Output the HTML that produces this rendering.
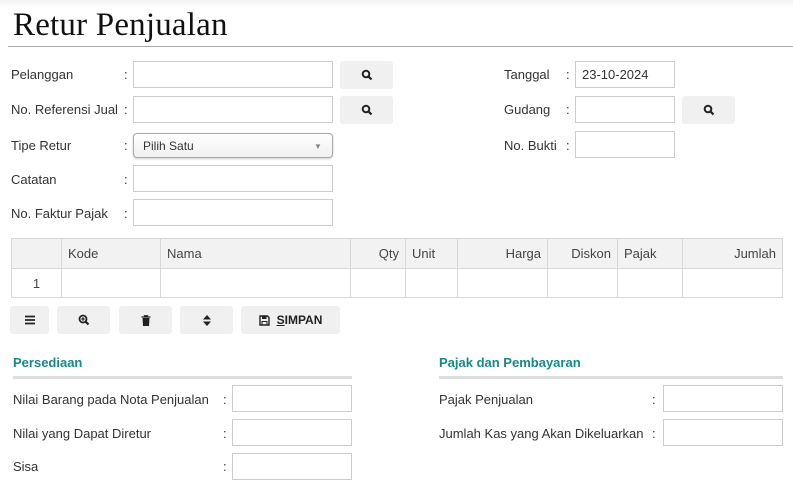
<!DOCTYPE html>
<html><head><meta charset="utf-8"><style>
*{box-sizing:border-box;margin:0;padding:0}
body{width:793px;height:495px;background:#fff;position:relative;overflow:hidden;font-family:"Liberation Sans",sans-serif;font-size:13px;color:#333}
.a{position:absolute}
.t{position:absolute;line-height:16px;white-space:nowrap}
.in{position:absolute;border:1px solid #ccc;background:#fff;height:27px}
.btn{position:absolute;background:#f0f0f0;border-radius:3px;height:28px;display:flex;align-items:center;justify-content:center;font-weight:bold;font-size:12px;color:#222}
h1{position:absolute;left:13px;top:7px;font-family:"Liberation Serif",serif;font-weight:normal;font-size:33px;color:#111;letter-spacing:0.2px}
table{position:absolute;left:11px;top:238px;border-collapse:collapse;width:772px}
td{border:1px solid #d8d8d8;height:29px;padding:0 6px;color:#444}
tr.h td{background:#f2f2f2;height:30px}
.r{text-align:right}
.sec{position:absolute;color:#17888a;font-weight:600;font-size:13px}
.ln{position:absolute;height:3px;background:#ddd}
</style></head><body>
<div class="a" style="left:0;top:0;width:793px;height:8px;background:linear-gradient(#f2f2f2,#fff)"></div>
<h1>Retur Penjualan</h1>
<div class="a" style="left:8px;top:46px;width:785px;height:1px;background:#aaa"></div>

<div class="t" style="left:11px;top:67px">Pelanggan</div><div class="t" style="left:124px;top:67px">:</div>
<div class="in" style="left:133px;top:61px;width:200px"></div>
<div class="btn" style="left:340px;top:61px;width:53px"><svg width="12" height="12" viewBox="0 0 12 12"><circle cx="5" cy="5" r="3.3" fill="none" stroke="#222" stroke-width="2"/><path d="M7.3 7.3L10.5 10.5" stroke="#222" stroke-width="2.2"/></svg></div>

<div class="t" style="left:11px;top:102px">No. Referensi Jual</div><div class="t" style="left:124px;top:102px">:</div>
<div class="in" style="left:133px;top:96px;width:200px"></div>
<div class="btn" style="left:340px;top:96px;width:53px"><svg width="12" height="12" viewBox="0 0 12 12"><circle cx="5" cy="5" r="3.3" fill="none" stroke="#222" stroke-width="2"/><path d="M7.3 7.3L10.5 10.5" stroke="#222" stroke-width="2.2"/></svg></div>

<div class="t" style="left:11px;top:138px">Tipe Retur</div><div class="t" style="left:124px;top:138px">:</div>
<div class="a" style="left:133px;top:133px;width:200px;height:25px;border:1px solid #aaa;border-radius:4px;background:linear-gradient(#fff,#f0f0f0);box-shadow:0 1px 2px #ccc"><span class="t" style="left:9px;top:4px;font-size:12px">Pilih Satu</span><span class="t" style="left:180px;top:5px;font-size:8px;color:#888">▼</span></div>

<div class="t" style="left:11px;top:172px">Catatan</div><div class="t" style="left:124px;top:172px">:</div>
<div class="in" style="left:133px;top:165px;width:200px"></div>
<div class="t" style="left:11px;top:206px">No. Faktur Pajak</div><div class="t" style="left:124px;top:206px">:</div>
<div class="in" style="left:133px;top:199px;width:200px"></div>

<div class="t" style="left:504px;top:67px">Tanggal</div><div class="t" style="left:566px;top:67px">:</div>
<div class="in" style="left:575px;top:61px;width:100px"><span class="t" style="left:6px;top:5px">23-10-2024</span></div>
<div class="t" style="left:504px;top:102px">Gudang</div><div class="t" style="left:566px;top:102px">:</div>
<div class="in" style="left:575px;top:96px;width:100px"></div>
<div class="btn" style="left:682px;top:96px;width:53px"><svg width="12" height="12" viewBox="0 0 12 12"><circle cx="5" cy="5" r="3.3" fill="none" stroke="#222" stroke-width="2"/><path d="M7.3 7.3L10.5 10.5" stroke="#222" stroke-width="2.2"/></svg></div>
<div class="t" style="left:504px;top:138px">No. Bukti</div><div class="t" style="left:566px;top:138px">:</div>
<div class="in" style="left:575px;top:131px;width:100px"></div>

<table>
<tr class="h"><td style="width:50px"></td><td style="width:99px">Kode</td><td style="width:190px">Nama</td><td class="r" style="width:55px">Qty</td><td style="width:52px">Unit</td><td class="r" style="width:90px">Harga</td><td class="r" style="width:70px">Diskon</td><td style="width:65px">Pajak</td><td class="r">Jumlah</td></tr>
<tr><td style="text-align:center">1</td><td></td><td></td><td></td><td></td><td></td><td></td><td></td><td></td></tr>
</table>

<div class="btn" style="left:10px;top:306px;width:39px"><svg width="10" height="10" viewBox="0 0 10 10"><path d="M0 1.5H10M0 5H10M0 8.5H10" stroke="#222" stroke-width="1.8"/></svg></div>
<div class="btn" style="left:57px;top:306px;width:53px"><svg width="12" height="12" viewBox="0 0 12 12"><circle cx="5" cy="5" r="3.5" fill="none" stroke="#222" stroke-width="1.8"/><path d="M7.3 7.3L10.5 10.5" stroke="#222" stroke-width="2.2"/><path d="M3.3 5H6.7M5 3.3V6.7" stroke="#222" stroke-width="1.2"/></svg></div>
<div class="btn" style="left:119px;top:306px;width:53px"><svg width="10" height="11" viewBox="0 0 10 11"><path d="M0.5 2H9.5M3.5 2V0.8H6.5V2" stroke="#222" stroke-width="1.3" fill="none"/><path d="M1.5 3H8.5L8 11H2Z" fill="#222"/></svg></div>
<div class="btn" style="left:180px;top:306px;width:53px"><svg width="8" height="11" viewBox="0 0 8 11"><path d="M4 0L8 4.5H0ZM4 11L0 6.5H8Z" fill="#222"/></svg></div>
<div class="btn" style="left:241px;top:306px;width:99px"><svg width="11" height="11" viewBox="0 0 11 11" style="margin-right:7px"><path d="M1 1H8.5L10 2.5V10H1Z" fill="none" stroke="#222" stroke-width="1.4"/><rect x="3" y="1" width="4.5" height="3" fill="#222"/><rect x="3" y="6.5" width="5" height="3.5" fill="none" stroke="#222" stroke-width="1"/></svg><span><u>S</u>IMPAN</span></div>

<div class="sec" style="left:13px;top:355px">Persediaan</div>
<div class="ln" style="left:13px;top:376px;width:339px"></div>
<div class="sec" style="left:439px;top:355px">Pajak dan Pembayaran</div>
<div class="ln" style="left:439px;top:376px;width:344px"></div>

<div class="t" style="left:13px;top:392px">Nilai Barang pada Nota Penjualan</div><div class="t" style="left:223px;top:392px">:</div>
<div class="in" style="left:232px;top:385px;width:120px"></div>
<div class="t" style="left:13px;top:426px">Nilai yang Dapat Diretur</div><div class="t" style="left:223px;top:426px">:</div>
<div class="in" style="left:232px;top:419px;width:120px"></div>
<div class="t" style="left:13px;top:459px">Sisa</div><div class="t" style="left:223px;top:459px">:</div>
<div class="in" style="left:232px;top:453px;width:120px"></div>

<div class="t" style="left:439px;top:392px">Pajak Penjualan</div><div class="t" style="left:652px;top:392px">:</div>
<div class="in" style="left:663px;top:385px;width:120px"></div>
<div class="t" style="left:439px;top:426px">Jumlah Kas yang Akan Dikeluarkan</div><div class="t" style="left:652px;top:426px">:</div>
<div class="in" style="left:663px;top:419px;width:120px"></div>
</body></html>
